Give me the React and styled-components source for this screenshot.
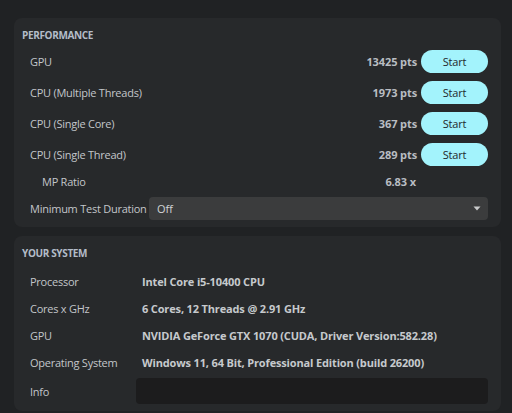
import React from "react";
import styled, { createGlobalStyle } from "styled-components";

const GlobalStyle = createGlobalStyle`
  html, body {
    margin: 0;
    padding: 0;
    background: #202224;
  }
  body {
    font-family: "Open Sans", "Liberation Sans", sans-serif;
    font-size: 11px;
    color: #c3c6ca;
  }
`;

const Page = styled.div`
  width: 512px;
  height: 413px;
  box-sizing: border-box;
  padding: 18px 11px 0 14px;
  display: flex;
  flex-direction: column;
  gap: 9px;
`;

const Panel = styled.section`
  background: #27292b;
  border-radius: 8px;
  padding: 11px 13px 7px 8px;
  display: flex;
  flex-direction: column;
`;

const Heading = styled.h3`
  margin: 0 0 9px 0;
  height: 12px;
  line-height: 12px;
  font-size: 10px;
  font-weight: 700;
  color: #b3bcc8;
  letter-spacing: -0.35px;
`;

const Row = styled.div`
  display: flex;
  align-items: center;
  height: ${({ $h }) => $h || 23}px;
  margin-top: ${({ $mt }) => $mt || 0}px;
  padding-left: ${({ $indent }) => ($indent ? 20 : 8)}px;
`;

const Label = styled.span`
  flex: ${({ $w }) => ($w ? `0 0 ${$w}px` : "1")};
  min-width: 0;
  white-space: nowrap;
  letter-spacing: -0.25px;
`;

const Score = styled.span`
  font-weight: 700;
  color: #b9bdc2;
  letter-spacing: -0.1px;
  margin-right: ${({ $pad }) => $pad || 4}px;
`;

const StartButton = styled.button`
  width: 67px;
  height: 23px;
  border: none;
  border-radius: 12px;
  background: #a3f3fc;
  color: #1f272b;
  font-family: inherit;
  font-size: 11px;
  letter-spacing: -0.2px;
  padding: 0;
  cursor: pointer;
`;

const Select = styled.div`
  flex: 1;
  height: 23px;
  background: #3b3c3d;
  border-radius: 4px;
  display: flex;
  align-items: center;
  justify-content: space-between;
  padding: 0 7px 0 8px;
  color: #d2d4d6;
`;

const Value = styled.span`
  font-weight: 700;
  color: #c6c9cd;
  padding-left: 6px;
  letter-spacing: -0.15px;
  white-space: nowrap;
`;

const InfoBox = styled.div`
  flex: 1;
  height: 26px;
  background: #1c1c1d;
  border-radius: 4px;
`;

const performance = [
  { name: "GPU", score: "13425 pts" },
  { name: "CPU (Multiple Threads)", score: "1973 pts" },
  { name: "CPU (Single Core)", score: "367 pts" },
  { name: "CPU (Single Thread)", score: "289 pts" },
];

const system = [
  ["Processor", "Intel Core i5-10400 CPU"],
  ["Cores x GHz", "6 Cores, 12 Threads @ 2.91 GHz"],
  ["GPU", "NVIDIA GeForce GTX 1070 (CUDA, Driver Version:582.28)"],
  ["Operating System", "Windows 11, 64 Bit, Professional Edition (build 26200)"],
];

function Caret() {
  return (
    <svg width="8" height="5" viewBox="0 0 8 5">
      <path d="M0.5 0.5 L7.5 0.5 L4 4.5 Z" fill="#c9cacb" />
    </svg>
  );
}

export default function App() {
  return (
    <>
      <GlobalStyle />
      <Page>
        <Panel>
          <Heading>PERFORMANCE</Heading>
          {performance.map((p, i) => (
            <Row key={p.name} $mt={i ? 8 : 0}>
              <Label>{p.name}</Label>
              <Score>{p.score}</Score>
              <StartButton>Start</StartButton>
            </Row>
          ))}
          <Row $indent $h={18} $mt={6}>
            <Label>MP Ratio</Label>
            <Score $pad={72}>6.83 x</Score>
          </Row>
          <Row $mt={7}>
            <Label $w={119}>Minimum Test Duration</Label>
            <Select>
              <span>Off</span>
              <Caret />
            </Select>
          </Row>
        </Panel>
        <Panel>
          <Heading>YOUR SYSTEM</Heading>
          {system.map(([k, v]) => (
            <Row key={k} $h={27}>
              <Label $w={106}>{k}</Label>
              <Value>{v}</Value>
            </Row>
          ))}
          <Row $h={26} $mt={2}>
            <Label $w={106}>Info</Label>
            <InfoBox />
          </Row>
        </Panel>
      </Page>
    </>
  );
}
